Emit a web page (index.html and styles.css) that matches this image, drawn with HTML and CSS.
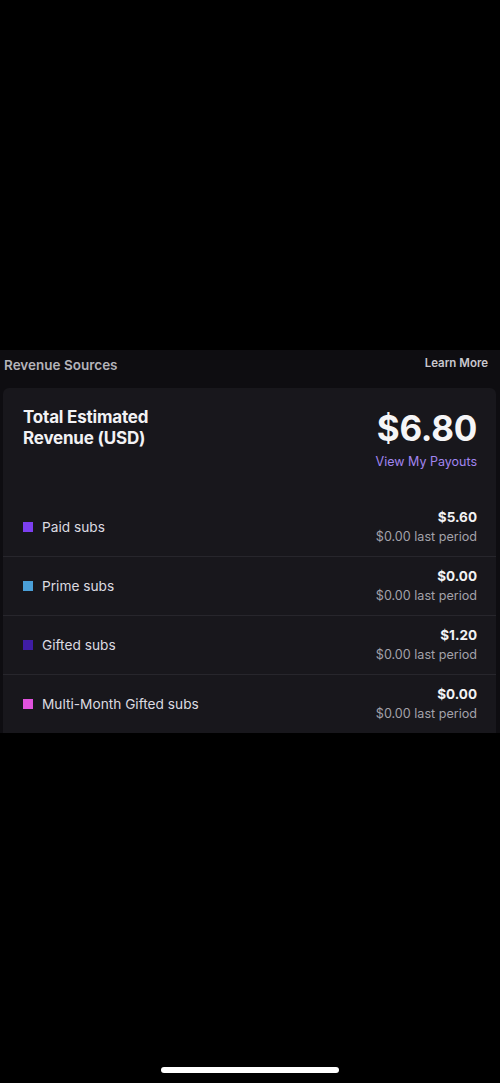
FILE: index.html
```html
<!DOCTYPE html>
<html>
<head>
<meta charset="utf-8">
<link rel="stylesheet" href="styles.css">
</head>
<body>
<div class="screen">
  <section class="panel">
    <div class="panel-head">
      <span class="panel-title">Revenue Sources</span>
      <span class="learn">Learn More</span>
    </div>
    <div class="card">
      <div class="summary">
        <div class="total-label">Total Estimated<br>Revenue (USD)</div>
        <div class="total-right">
          <div class="total-amount">$6.80</div>
          <div class="payouts">View My Payouts</div>
        </div>
      </div>
      <div class="row">
        <div class="row-left"><span class="swatch paid"></span><span class="row-label">Paid subs</span></div>
        <div class="row-right"><div class="amt">$5.60</div><div class="prev">$0.00 last period</div></div>
      </div>
      <div class="row">
        <div class="row-left"><span class="swatch prime"></span><span class="row-label">Prime subs</span></div>
        <div class="row-right"><div class="amt">$0.00</div><div class="prev">$0.00 last period</div></div>
      </div>
      <div class="row">
        <div class="row-left"><span class="swatch gifted"></span><span class="row-label">Gifted subs</span></div>
        <div class="row-right"><div class="amt">$1.20</div><div class="prev">$0.00 last period</div></div>
      </div>
      <div class="row">
        <div class="row-left"><span class="swatch multi"></span><span class="row-label">Multi-Month Gifted subs</span></div>
        <div class="row-right"><div class="amt">$0.00</div><div class="prev">$0.00 last period</div></div>
      </div>
    </div>
  </section>
  <div class="home-bar"></div>
</div>
</body>
</html>
```

FILE: styles.css
```css
html, body {
  margin: 0;
  padding: 0;
  background: #000;
}
body {
  font-family: Inter, "Noto Sans", sans-serif;
  color: #efeff1;
}
.screen {
  width: 500px;
  height: 1083px;
  display: flex;
  flex-direction: column;
  background: #000;
}
.panel {
  margin-top: 350px;
  background: #0e0d11;
  padding: 0 4px 0 3px;
}
.panel-head {
  height: 38px;
  display: flex;
  justify-content: space-between;
  align-items: center;
  padding: 0 8px 0 1px;
}
.panel-title {
  font-size: 13.5px;
  font-weight: 600;
  color: #b4b3ba;
  margin-top: -8px;
}
.learn {
  font-size: 11.5px;
  font-weight: 600;
  color: #c9c8ce;
  margin-top: -12px;
}
.card {
  background: #18171c;
  border-radius: 6px 6px 0 0;
}
.summary {
  height: 110px;
  box-sizing: border-box;
  padding: 19px 19px 0 20px;
  display: flex;
  justify-content: space-between;
}
.total-label {
  font-size: 17px;
  font-weight: 700;
  line-height: 21px;
  color: #f2f2f4;
  letter-spacing: -0.2px;
}
.total-right {
  margin-top: 1px;
  display: flex;
  flex-direction: column;
  align-items: flex-end;
}
.total-amount {
  font-size: 35px;
  font-weight: 700;
  line-height: 40px;
  color: #f5f5f7;
  letter-spacing: -0.3px;
}
.payouts {
  margin-top: 5px;
  font-size: 12.5px;
  line-height: 18px;
  color: #a185f0;
}
.row {
  height: 58px;
  padding: 0 19px 0 20px;
  display: flex;
  align-items: center;
  justify-content: space-between;
}
.row + .row {
  border-top: 1px solid #27262c;
}
.row-left {
  display: flex;
  align-items: center;
}
.swatch {
  width: 10px;
  height: 10px;
  margin-right: 9px;
}
.paid { background: #7c3ff0; }
.prime { background: #4a9fd8; }
.gifted { background: #3f1da5; }
.multi { background: #e052dd; }
.row-label {
  font-size: 13.7px;
  color: #dcdbe1;
}
.row-right {
  text-align: right;
}
.amt {
  font-size: 13.5px;
  font-weight: 700;
  line-height: 19px;
  color: #f2f2f4;
}
.prev {
  font-size: 12.6px;
  line-height: 19px;
  color: #a3a2aa;
}
.home-bar {
  margin: auto auto 10px auto;
  width: 178px;
  height: 6px;
  border-radius: 3px;
  background: #fff;
}
```
